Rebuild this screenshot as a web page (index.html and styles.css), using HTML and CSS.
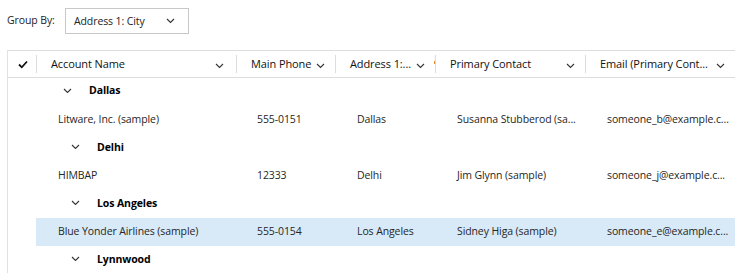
FILE: index.html
```html
<!DOCTYPE html>
<html lang="en">
<head>
    <meta charset="UTF-8">
    <title>Accounts</title>
    <link rel="stylesheet" href="styles.css">
</head>
<body>

<div class="toolbar">
    <span class="toolbar-label">Group By:</span>
    <div class="select">
        <span>Address 1: City</span>
        <svg class="chev" width="9" height="6" viewBox="0 0 9 6"><polyline points="1,1 4.5,4.5 8,1"/></svg>
    </div>
</div>

<div class="grid">
    <div class="row head">
        <div class="cell check">
            <svg width="10" height="9" viewBox="0 0 10 9"><polyline points="1,4.5 3.8,7.3 9,1.5"/></svg>
        </div>
        <div class="cell hcell"><span>Account Name</span><svg class="chev" width="9" height="6" viewBox="0 0 9 6"><polyline points="1,1 4.5,4.5 8,1"/></svg></div>
        <div class="cell hcell"><span>Main Phone</span><svg class="chev" width="9" height="6" viewBox="0 0 9 6"><polyline points="1,1 4.5,4.5 8,1"/></svg></div>
        <div class="cell hcell"><span>Address 1:...</span><svg class="chev" width="9" height="6" viewBox="0 0 9 6"><polyline points="1,1 4.5,4.5 8,1"/></svg><i class="resize-mark"></i></div>
        <div class="cell hcell"><span>Primary Contact</span><svg class="chev" width="9" height="6" viewBox="0 0 9 6"><polyline points="1,1 4.5,4.5 8,1"/></svg></div>
        <div class="cell hcell"><span>Email (Primary Cont...</span><svg class="chev" width="9" height="6" viewBox="0 0 9 6"><polyline points="1,1 4.5,4.5 8,1"/></svg></div>
    </div>

    <div class="row group first">
        <div class="cell check"></div>
        <div class="group-title"><svg class="chev" width="9" height="6" viewBox="0 0 9 6"><polyline points="1,1 4.5,4.5 8,1"/></svg><b>Dallas</b></div>
    </div>
    <div class="row data">
        <div class="cell check"></div>
        <div class="cell">Litware, Inc. (sample)</div>
        <div class="cell">555-0151</div>
        <div class="cell">Dallas</div>
        <div class="cell">Susanna Stubberod (sa...</div>
        <div class="cell">someone_b@example.c...</div>
    </div>

    <div class="row group">
        <div class="cell check"></div>
        <div class="group-title"><svg class="chev" width="9" height="6" viewBox="0 0 9 6"><polyline points="1,1 4.5,4.5 8,1"/></svg><b>Delhi</b></div>
    </div>
    <div class="row data">
        <div class="cell check"></div>
        <div class="cell">HIMBAP</div>
        <div class="cell">12333</div>
        <div class="cell">Delhi</div>
        <div class="cell">Jim Glynn (sample)</div>
        <div class="cell">someone_j@example.c...</div>
    </div>

    <div class="row group">
        <div class="cell check"></div>
        <div class="group-title"><svg class="chev" width="9" height="6" viewBox="0 0 9 6"><polyline points="1,1 4.5,4.5 8,1"/></svg><b>Los Angeles</b></div>
    </div>
    <div class="row data selected">
        <div class="cell check"></div>
        <div class="cell">Blue Yonder Airlines (sample)</div>
        <div class="cell">555-0154</div>
        <div class="cell">Los Angeles</div>
        <div class="cell">Sidney Higa (sample)</div>
        <div class="cell">someone_e@example.c...</div>
    </div>

    <div class="row group">
        <div class="cell check"></div>
        <div class="group-title"><svg class="chev" width="9" height="6" viewBox="0 0 9 6"><polyline points="1,1 4.5,4.5 8,1"/></svg><b>Lynnwood</b></div>
    </div>
</div>

</body>
</html>
```

FILE: styles.css
```css
body {
    margin: 0;
    font-family: "Open Sans", Arial, sans-serif;
    font-size: 10.5px;
    letter-spacing: -0.1px;
    color: #262626;
    background: #fff;
    overflow: hidden;
}

.chev polyline {
    fill: none;
    stroke: #333;
    stroke-width: 1.1;
}

/* barra superior */
.toolbar {
    display: flex;
    align-items: flex-start;
    height: 50px;
    padding-left: 7px;
}

.toolbar-label {
    margin-top: 13px;
    width: 58px;
    color: #222;
}

.select {
    margin-top: 8px;
    box-sizing: border-box;
    width: 124px;
    height: 26px;
    border: 1px solid #c8c8c8;
    display: flex;
    align-items: center;
    padding: 0 13px 1px 8px;
    justify-content: space-between;
    color: #222;
}

/* tabla */
.grid {
    margin-left: 7px;
    border-left: 1px solid #e1e1e1;
    height: 223px;
}

.row {
    display: grid;
    grid-template-columns: 28px 200px 99px 100px 150px 150px;
    height: 28px;
}

.cell {
    display: flex;
    align-items: center;
    white-space: nowrap;
    overflow: hidden;
    padding-bottom: 2px;
    box-sizing: border-box;
}

.head {
    height: 28px;
    box-sizing: border-box;
    border-top: 1px solid #dcdcdc;
    border-bottom: 1px solid #dcdcdc;
    color: #111;
    font-size: 11px;
}

.head .cell {
    padding-bottom: 2px;
}

.check {
    justify-content: center;
    padding-left: 2px;
}

.head .check {
    padding-bottom: 0;
}

.check polyline {
    fill: none;
    stroke: #111;
    stroke-width: 1.8;
}

.hcell {
    position: relative;
    justify-content: space-between;
    padding: 0 10px 0 15px;
}

.hcell::before {
    content: "";
    position: absolute;
    left: 0;
    top: 4px;
    bottom: 4px;
    border-left: 1px solid #dcdcdc;
}

.hcell .chev {
    margin-top: 6px;
}

.hcell:nth-child(2) {
    padding-right: 12px;
}

.resize-mark {
    position: absolute;
    right: 0;
    top: 10px;
    width: 1px;
    height: 3px;
    background: #e08a2c;
}

.data .cell:not(.check) {
    padding-left: 22px;
}

.data .cell:nth-child(3) {
    padding-left: 21px;
}

.selected .cell:not(.check) {
    background: #d8eaf8;
}

.group-title {
    grid-column: 2 / 7;
    display: flex;
    align-items: center;
    padding-left: 35px;
    padding-bottom: 3px;
    color: #000;
}

.group-title .chev {
    margin-right: 17px;
    margin-top: 1px;
}

.group.first .group-title {
    padding-left: 27px;
    padding-bottom: 4px;
}

.group-title b {
    font-weight: 700;
}
```
